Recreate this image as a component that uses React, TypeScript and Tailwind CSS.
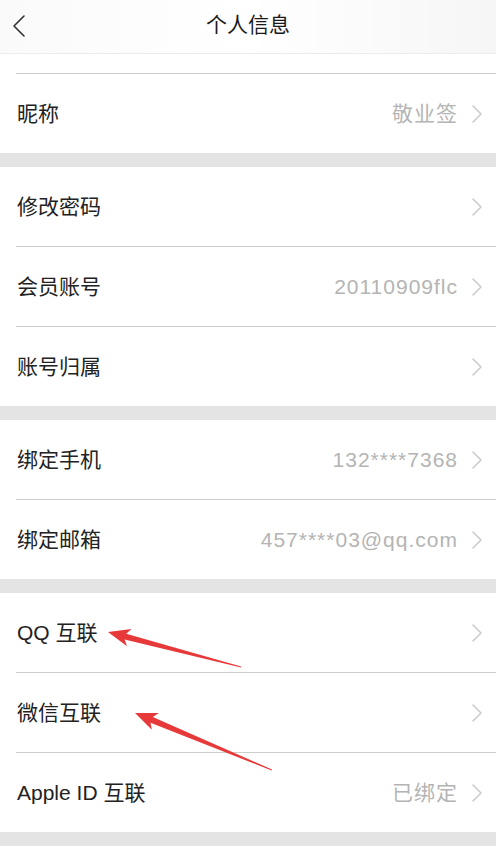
import React from "react";

const FONT = {
  fontFamily:
    '"Liberation Sans", "Noto Sans CJK SC", "Noto Sans", sans-serif',
};

function Chevron() {
  return (
    <svg width="12" height="20" viewBox="0 0 12 20" className="shrink-0">
      <path
        d="M2 2 L10 10 L2 18"
        fill="none"
        stroke="#c9c9c9"
        strokeWidth="1.5"
        strokeLinecap="round"
        strokeLinejoin="round"
      />
    </svg>
  );
}

type RowProps = { label: string; value?: string; last?: boolean };

function Row({ label, value, last }: RowProps) {
  return (
    <div className="pl-4">
      <div
        className={`flex items-center h-[79px] pr-[13px] ${
          last ? "" : "border-b border-[#cdcdcd]"
        } box-content`}
      >
        <span className="flex-1 text-[21px] text-[#222] pl-px">{label}</span>
        {value && (
          <span className="text-[21px] text-[#b4b4b4] tracking-[1px] mr-[13px]">
            {value}
          </span>
        )}
        <Chevron />
      </div>
    </div>
  );
}

function Gap() {
  return <div className="h-[14px] bg-[#e4e4e4]" />;
}

export default function App() {
  return (
    <div className="relative w-[496px] h-[864px] bg-white overflow-hidden" style={FONT}>
      {/* header */}
      <div className="relative h-[54px] flex items-center justify-center bg-gradient-to-r from-[#fafafa] via-white to-[#f6f6f6] border-b border-[#ececec]">
        <svg
          width="16"
          height="24"
          viewBox="0 0 16 24"
          className="absolute left-[11px] top-[14px]"
        >
          <path
            d="M13 2 L3 12 L13 22"
            fill="none"
            stroke="#333"
            strokeWidth="1.6"
            strokeLinecap="round"
            strokeLinejoin="round"
          />
        </svg>
        <span className="text-[21px] text-[#1a1a1a] -mt-[3px]">个人信息</span>
      </div>
      <div className="pl-4">
        <div className="h-[19px] border-b border-[#cdcdcd] box-content" />
      </div>
      <Row label="昵称" value="敬业签" last />
      <Gap />
      <Row label="修改密码" />
      <Row label="会员账号" value="20110909flc" />
      <Row label="账号归属" last />
      <Gap />
      <Row label="绑定手机" value="132****7368" />
      <Row label="绑定邮箱" value="457****03@qq.com" last />
      <Gap />
      <Row label="QQ 互联" />
      <Row label="微信互联" />
      <Row label="Apple ID 互联" value="已绑定" last />
      <Gap />

      {/* annotation arrows */}
      <svg
        className="absolute left-0 top-0 pointer-events-none"
        width="496"
        height="864"
        viewBox="0 0 496 864"
      >
        <polygon
          points="108,632 131.6,628.9 126.2,633.7 241,666.5 241,667.5 124.6,639.5 127,646.3"
          fill="#e8393a"
        />
        <polygon
          points="135,713 158.8,713.1 152.8,717.1 272,769.5 271.6,770.5 150.5,722.7 151.8,729.7"
          fill="#e8393a"
        />
      </svg>
    </div>
  );
}
